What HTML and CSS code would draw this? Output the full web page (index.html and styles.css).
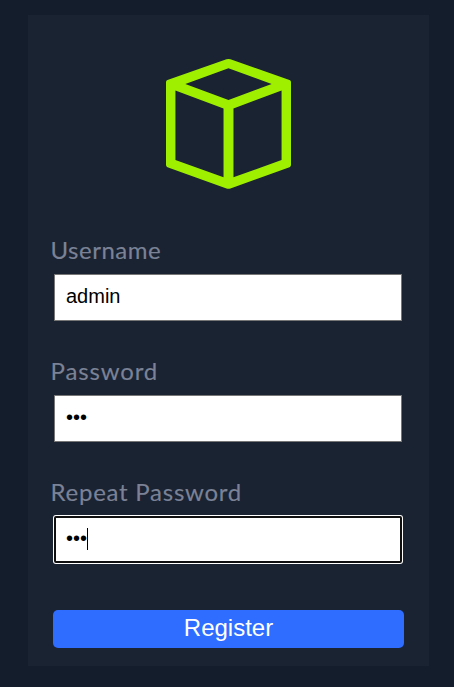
FILE: index.html
```html
<!DOCTYPE html>
<html lang="en">
<head>
<meta charset="utf-8">
<title>Register</title>
<link rel="stylesheet" href="styles.css">
</head>
<body>
<form class="card">
  <svg class="logo" viewBox="0 0 126 130" preserveAspectRatio="none" aria-hidden="true">
    <path fill="#9fef00" fill-rule="evenodd" d="M61 0.3Q63 -0.3 65 0.3L124.5 20.9Q126 21.5 126 23V106Q126 107.500 124.500 108.200L65 129.400Q63 130 61 129.400L1.500 108.200Q0 107.500 0 106V23Q0 21.500 1.500 20.900ZM63 9.300L19.500 25L63 41L106.500 25ZM9.500 31.500V101L58 118.300V49.500ZM116.500 31.500L68 49.500V118.300L116.500 101Z"/>
  </svg>
  <div class="field">
    <label class="label username" for="username">Username</label>
    <input class="input" id="username" type="text" value="admin">
  </div>
  <div class="field">
    <label class="label password" for="password">Password</label>
    <input class="input" id="password" type="password" value="abc">
  </div>
  <div class="field">
    <label class="label repeat" for="repeat">Repeat Password</label>
    <input class="input active" id="repeat" type="password" value="abc">
    <span class="caret"></span>
  </div>
  <button class="submit" type="button">Register</button>
</form>
</body>
</html>
```
FILE: styles.css
```css
* { box-sizing: border-box; }
body {
  margin: 0;
  height: 687px;
  padding: 15px 25px 21px 28px;
  background: #141d2b;
  overflow: hidden;
}
.card {
  display: flex;
  flex-direction: column;
  height: 651px;
  padding: 44px 25px 18px;
  background: #1a2332;
}
.logo {
  flex: none;
  width: 125px;
  height: 130px;
  margin: 0 0 45px 113px;
}
.field {
  position: relative;
  height: 121px;
  padding-left: 1px;
}
.label {
  display: block;
  height: 40px;
  margin-left: -3.500px;
  color: #7b8296;
  font: 24px/32px Lato, sans-serif;
  -webkit-text-stroke: 0.15px #7b8296;
  white-space: nowrap;
}
.username { letter-spacing: 0.5px; }
.password { letter-spacing: 0.85px; }
.repeat { letter-spacing: 0.75px; }
.input {
  display: block;
  width: 348px;
  height: 47px;
  margin: 0;
  padding: 0 11px 3px;
  border: 1px solid #767676;
  border-radius: 0;
  outline: none;
  background: #fff;
  color: #000;
  font: 20px "Liberation Sans", Arial, sans-serif;
}
.active {
  border: 2px solid #101010;
  padding: 0 10px 2px;
  border-radius: 2px;
  box-shadow: 0 0 0 1px #fff;
}
.caret {
  position: absolute;
  left: 34px;
  top: 52px;
  width: 1px;
  height: 22px;
  background: #000;
}
.submit {
  width: 351px;
  height: 38px;
  margin-top: 13px;
  padding: 0 0 2px;
  border: 0;
  border-radius: 5px;
  background: #2e6dff;
  color: #fff;
  font: 24px "Liberation Sans", Arial, sans-serif;
}
```
